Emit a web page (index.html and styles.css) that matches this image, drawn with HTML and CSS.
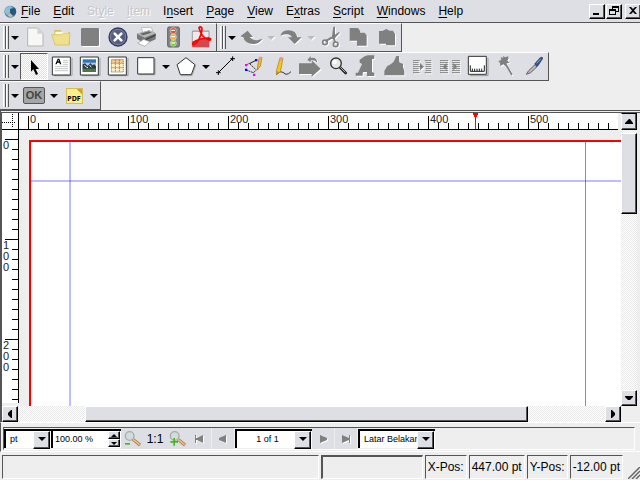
FILE: index.html
```
<!DOCTYPE html>
<html lang="en">
<head>
<meta charset="utf-8">
<title>Scribus</title>
<link rel="stylesheet" href="styles.css">
</head>
<body>
<header class="menubar">
  <svg class="app-icon" viewBox="0 0 39 39" aria-hidden="true"><circle cx="19" cy="20" r="18" fill="#4e86a6"/><path d="M3 14Q9 3 20 3L26 8 18 12 20 20 10 30Q0 24 3 14Z" fill="#8fc0d6"/><path d="M18 12L33 9Q38 16 36 24L27 33 18 24Z" fill="#29577c"/><path d="M10 30L18 24 27 33Q18 40 10 30Z" fill="#c9c0b2"/></svg>
  <nav class="menus">
    <button><u>F</u>ile</button>
    <button><u>E</u>dit</button>
    <button disabled>St<u>y</u>le</button>
    <button disabled><u>I</u>tem</button>
    <button>I<u>n</u>sert</button>
    <button><u>P</u>age</button>
    <button><u>V</u>iew</button>
    <button>E<u>x</u>tras</button>
    <button><u>S</u>cript</button>
    <button><u>W</u>indows</button>
    <button><u>H</u>elp</button>
  </nav>
  <div class="window-buttons">
    <button class="raised" aria-label="Minimize"><svg viewBox="0 0 12 12"><path d="M2 8h6v2H2z"/></svg></button>
    <button class="raised" aria-label="Restore"><svg viewBox="0 0 12 12"><path d="M4 1h7v6H8V6h2V3H5v1H4zM1 4h7v6H1zM2 6v3h5V6z" fill-rule="evenodd"/></svg></button>
    <button class="raised close" aria-label="Close"><svg viewBox="0 0 12 12"><path d="M2 2h2l2 2 2-2h2L7 5.500 10 9H8L6 7 4 9H2l3-3.500z"/></svg></button>
  </div>
</header>

<div class="toolbar-row">
  <div class="toolbar" role="toolbar" aria-label="File">
    <span class="grip"></span><button class="drop" aria-label="Toolbar menu"></button>
    <button class="tool" aria-label="New"><svg viewBox="60 72 84 81"><path d="M83 84h30l16 17v37H83z" fill="#f7f7f5" stroke="#b5b5b2" stroke-width="3"/><path d="M112 83l17 18h-17z" fill="#d5d5d3"/></svg></button>
    <button class="tool" aria-label="Open"><svg viewBox="144 72 84 81"><path d="M163 90h18l5 5h23v40h-43z" fill="#d6bd52"/><path d="M166 95h39v13h-39z" fill="#fbf8e5"/><path d="M155 104h30l6-5h19l-3 36h-42z" fill="#eee08c" stroke="#cdb956" stroke-width="2"/></svg></button>
    <button class="tool" aria-label="Save" disabled><svg viewBox="228 72 84 81"><rect x="243" y="84" width="54" height="54" rx="4"/></svg></button>
    <button class="tool" aria-label="Close document"><svg viewBox="312 72 84 81"><circle cx="354" cy="111" r="27" fill="#555d82" stroke="#343b5d" stroke-width="4"/><circle cx="354" cy="111" r="23" fill="none" stroke="#8e95b1" stroke-width="2"/><path d="M344 101l20 20M364 101l-20 20" stroke="#fff" stroke-width="8" stroke-linecap="round"/></svg></button>
    <button class="tool" aria-label="Print"><svg viewBox="396 72 84 81"><path d="M424 83l30-1 5 14-29 5z" fill="#fafafa" stroke="#aaa" stroke-width="2"/><path d="M411 101l37-10 19 9v18l-31 14-25-16z" fill="#777"/><path d="M411 101l37-10 19 9-33 13z" fill="#b9b9b9"/><path d="M420 101l26-7 9 4-26 8z" fill="#666"/><path d="M413 130l18-12 18 7-14 14z" fill="#fff" stroke="#999" stroke-width="2"/><path d="M437 116l30-13v5l-30 13z" fill="#444"/></svg></button>
    <button class="tool" aria-label="Preflight"><svg viewBox="480 72 84 81"><rect x="503" y="81" width="35" height="60" rx="4" fill="#858585" stroke="#626262" stroke-width="3"/><circle cx="520" cy="92" r="9" fill="#e44436" stroke="#ddd" stroke-width="2"/><circle cx="520" cy="111" r="9" fill="#f5ae29" stroke="#ddd" stroke-width="2"/><circle cx="520" cy="130" r="9" fill="#72cf32" stroke="#ddd" stroke-width="2"/><path d="M514 91h11M514 110h11M514 129h11" stroke="#fff6cc" stroke-width="4"/></svg></button>
    <button class="tool" aria-label="Export PDF"><svg viewBox="564 72 84 81"><path d="M577 94h50v47h-50z" fill="#eaeaf0" stroke="#777" stroke-width="2"/><path d="M577 126L627 110v31h-50z" fill="#d4474c"/><path d="M577 92h50" stroke="#bbb" stroke-width="3"/><path d="M597 83c3-4 9-2 9 5 0 14-13 43-25 46-5 0-4-7 4-10 12-7 30-10 43-9 7 2 4 6-2 5-14-4-25-20-27-31z" fill="none" stroke="#f00" stroke-width="5"/></svg></button>
  </div>
  <div class="toolbar" role="toolbar" aria-label="Edit">
    <span class="grip"></span><button class="drop" aria-label="Toolbar menu"></button>
    <button class="tool" aria-label="Undo" disabled><svg viewBox="81 72 84 81"><path d="M91 109l22-17 16 19h-10q9 12 26 9l12-4q-9 16-28 16-25-1-29-20z"/></svg></button>
    <button class="drop" aria-label="Undo history" disabled></button>
    <button class="tool" aria-label="Redo" disabled><svg viewBox="201 72 84 81"><path d="M211 107q5-16 25-16 22 0 26 21h13l-21 20-20-20h12q-8-15-35-5z"/></svg></button>
    <button class="drop" aria-label="Redo history" disabled></button>
    <button class="tool" aria-label="Cut" disabled><svg viewBox="321 72 84 81"><path d="M370 80h5v24l13-9v5l-15 16-8 1z"/><path d="M366 112L346 124M371 113l4 14" fill="none" stroke="#808080" stroke-width="6"/><circle cx="345" cy="127" r="7" fill="none" stroke="#808080" stroke-width="5"/><circle cx="377" cy="133" r="7" fill="none" stroke="#808080" stroke-width="5"/></svg></button>
    <button class="tool" aria-label="Copy" disabled><svg viewBox="405 72 84 81"><path d="M419 84h25l7 9v5h13l6 8v31h-29v-15h-22z"/></svg></button>
    <button class="tool" aria-label="Paste" disabled><svg viewBox="489 72 84 81"><path d="M507 93h10l12-6 10 5h10l6 10v34h-26l-1-5h-21z"/></svg></button>
  </div>
</div>

<div class="toolbar-row">
  <div class="toolbar" role="toolbar" aria-label="Tools">
    <span class="grip"></span><button class="drop" aria-label="Toolbar menu"></button>
    <button class="tool pressed" aria-label="Select"><svg viewBox="60 159 84 81"><path d="M93 180v35l7-7 8 17 6-3-7-15h10z" fill="#000"/></svg></button>
    <button class="tool" aria-label="Text frame"><svg viewBox="144 159 84 81"><path d="M216 174v53h-54" fill="none" stroke="#999" stroke-width="3"/><path d="M157 171h54v54h-54z" fill="#fff" stroke="#333" stroke-width="3"/><path d="M166 193h4l2-5h6l2 5h4l-6-17h-5zM173 184l2-5 2 5z" fill="#000" fill-rule="evenodd"/><path d="M189 182h15M189 188h15M189 194h15M165 200h39M165 206h39M165 212h39" stroke="#aaa" stroke-width="2"/></svg></button>
    <button class="tool" aria-label="Image frame"><svg viewBox="228 159 84 81"><path d="M300 174v53h-54" fill="none" stroke="#999" stroke-width="3"/><path d="M241 171h54v54h-54z" fill="#fff" stroke="#333" stroke-width="3"/><path d="M248 178h40v38h-40z" fill="#3174b4"/><path d="M248 188h40v13h-40z" fill="#a9cde8"/><path d="M248 193l7-3 8 8 9-9 5 7 6-3 5 6v9h-40z" fill="#303a40"/><path d="M248 206h40v10h-40z" fill="#497842"/><path d="M253 196l6 5 5 2M269 195l5 7" stroke="#eee" stroke-width="3"/></svg></button>
    <button class="tool" aria-label="Table"><svg viewBox="312 159 84 81"><path d="M384 174v53h-54" fill="none" stroke="#999" stroke-width="3"/><path d="M325 171h54v54h-54z" fill="#fff" stroke="#333" stroke-width="3"/><path d="M334 179h36v37h-36z" fill="#fff0c4"/><path d="M334 179h36v10h-36z" fill="#ffc789"/><path d="M334 190h36M334 203h36M346 179v37M358 179v37M334 216h36V179h-36z" fill="none" stroke="#555" stroke-width="2" stroke-dasharray="4 2"/></svg></button>
    <button class="tool" aria-label="Shape"><svg viewBox="396 159 84 81"><path d="M465 176v48h-48" fill="none" stroke="#999" stroke-width="3"/><path d="M413 173h49v49h-49z" fill="#fff" stroke="#333" stroke-width="3"/></svg></button>
    <button class="drop" aria-label="Choose shape"></button>
    <button class="tool" aria-label="Polygon"><svg viewBox="516 159 84 81"><path d="M560 176l27 21-11 30h-33" fill="none" stroke="#aaa" stroke-width="3"/><path d="M558 173l27 21-11 30h-33l-10-30z" fill="#fff" stroke="#333" stroke-width="3"/></svg></button>
    <button class="drop" aria-label="Polygon properties"></button>
    <button class="tool" aria-label="Line"><svg viewBox="6 159 84 81"><path d="M25 218L67 176M18 218h14M25 211v14M61 176h14M68 169v14" stroke="#000" stroke-width="3"/></svg></button>
    <button class="tool" aria-label="Bezier curve"><svg viewBox="90 159 84 81"><path d="M108 195l30-14-19 10 20 19-9 8-24-9" fill="none" stroke="#333" stroke-width="3" stroke-dasharray="6 2"/><path d="M148 172h8l-5 26-9 12 1-13z" fill="#f4bf18" stroke="#987018" stroke-width="2"/><path d="M148 171h8l-1 7h-8z" fill="#e79982"/><path d="M135 177h7v7h-7zM105 206h7v7h-7z" fill="#00f"/><path d="M105 192h7v7h-7zM129 221h7v7h-7z" fill="#f0f"/></svg></button>
    <button class="tool" aria-label="Freehand line"><svg viewBox="174 159 84 81"><path d="M198 224c15-16 22-5 30-1q8 0 15-8" fill="none" stroke="#333" stroke-width="3"/><path d="M210 174l9 1-8 41-11 8-1-10z" fill="#f8c817" stroke="#a57619" stroke-width="2"/><path d="M210 171l9 2-2 9-8-1z" fill="#e79982"/><path d="M199 214l12 2-11 8z" fill="#b48961"/></svg></button>
    <button class="tool" aria-label="Rotate" disabled><svg viewBox="258 159 84 81"><path d="M267 190h38v-9l27 25-27 24v-8h-38z"/><path d="M292 180l10-12v6q18-3 20 14-8-9-20-7v6z"/></svg></button>
    <button class="tool" aria-label="Zoom"><svg viewBox="342 159 84 81"><path d="M390 202l17 17" stroke="#222" stroke-width="8" stroke-linecap="round"/><path d="M390 201l16 16" stroke="#aaa" stroke-width="3"/><circle cx="378" cy="190" r="16" fill="#e7e7e7" stroke="#333" stroke-width="4"/><circle cx="374" cy="186" r="7" fill="#fafafa"/></svg></button>
    <button class="tool" aria-label="Edit contents" disabled><svg viewBox="426 159 84 81"><path d="M437 218h7l12-26-7-4v-9l15-10 9-3h20v10l-7 2v38l7 3v9h-22v-12h-11l-2 3v8h-21z"/></svg></button>
    <button class="tool" aria-label="Edit text" disabled><svg viewBox="510 159 84 81"><path d="M523 226v-13l8-14 12-7 8-7 8-17h8l1 19 11 5v9l4 12v13z"/></svg></button>
    <button class="tool" aria-label="Link frames" disabled><svg viewBox="-36 159 84 81"><path d="M-21 182H-1M-21 188H-4M-21 194H-4M-21 206H-4M-21 212H-4M-21 218H-1M14 182h20M17 188h17M17 194h17M17 206h17M17 212h17M14 218h20M-21 200H7M17 200h17" stroke="#808080" stroke-width="3"/><path d="M0 189l12 11-12 11z"/></svg></button>
    <button class="tool" aria-label="Unlink frames" disabled><svg viewBox="48 159 84 81"><path d="M60 182h24M60 188h24M60 194h24M60 200h24M60 206h24M60 212h24M60 218h24M96 182h24M96 188h24M96 194h24M96 200h24M96 206h24M96 212h24M96 218h24" stroke="#808080" stroke-width="3"/><path d="M80 189v22l-12-11zM100 189v22l12-11z"/></svg></button>
    <button class="tool" aria-label="Measure"><svg viewBox="132 159 84 81"><path d="M204 174v53h-54" fill="none" stroke="#999" stroke-width="3"/><path d="M145 169h54v54h-54z" fill="#fff" stroke="#333" stroke-width="3"/><path d="M151 196v18h42v-18M157 214v-8M164 214v-8M171 214v-8M178 214v-8M185 214v-8" fill="none" stroke="#222" stroke-width="3"/></svg></button>
    <button class="tool" aria-label="Copy properties" disabled><svg viewBox="216 159 84 81"><path d="M249 167l6 5 9-3 2 6-4 7 7 7-9 1-2 9-8-6-9 5-1-9-5-6 9-3-2-9 8 3z"/><path d="M257 192l19 33" stroke="#808080" stroke-width="5"/></svg></button>
    <button class="tool" aria-label="Eye dropper"><svg viewBox="300 159 84 81"><path d="M319 223l6-10 21-20 6 6-20 19z" fill="#b9b9bc" stroke="#656565" stroke-width="3"/><path d="M343 191l16-18q10-6 10 3l-14 21-6 4z" fill="#315282"/><path d="M350 190l12-13" stroke="#91a9cb" stroke-width="3"/></svg></button>
  </div>
</div>

<div class="toolbar-row">
  <div class="toolbar" role="toolbar" aria-label="PDF tools">
    <span class="grip"></span><button class="drop" aria-label="Toolbar menu"></button>
    <button class="tool" aria-label="PDF fields"><span class="ok-key">OK</span></button>
    <button class="drop" aria-label="Choose field"></button>
    <button class="tool" aria-label="PDF annotations"><span class="pdf-note">PDF</span></button>
    <button class="drop" aria-label="Choose annotation"></button>
  </div>
</div>

<main class="workspace">
  <div class="ruler-corner"></div>
  <div class="ruler-top"><span>0</span><span>100</span><span>200</span><span>300</span><span>400</span><span>500</span><svg class="pointer" viewBox="0 0 5 16" aria-hidden="true"><path d="M0 0h5v2H4v2H3v12H2V4H1V2H0z" fill="red"/></svg></div>
  <div class="scroll-v">
    <button class="raised" aria-label="Scroll up"><svg viewBox="0 0 12 12"><path d="M6 3h1l3 4v1H2V7z"/></svg></button>
    <div class="thumb raised"></div>
    <button class="raised" aria-label="Scroll down"><svg viewBox="0 0 12 12"><path d="M2 4h8v1L7 8H5L2 5z"/></svg></button>
  </div>
  <div class="ruler-left"><span>0</span><span>1<br>0<br>0</span><span>2<br>0<br>0</span></div>
  <div class="canvas"><div class="page"></div></div>
  <div class="scroll-h">
    <button class="raised" aria-label="Scroll left"><svg viewBox="0 0 12 12"><path d="M8 2v8H7L4 7V5l3-3z"/></svg></button>
    <div class="thumb raised"></div>
    <button class="raised" aria-label="Scroll right"><svg viewBox="0 0 12 12"><path d="M4 2h1l3 3v2l-3 3H4z"/></svg></button>
  </div>
</main>

<div class="view-panel">
  <div class="view-bar">
    <span class="combo unit"><select aria-label="Unit"><option>pt</option></select></span>
    <span class="spin"><input type="text" aria-label="Zoom" value="100.00 %"><span class="steps"><button class="raised" aria-label="Zoom up"><svg viewBox="0 0 8 4"><path d="M4 0l4 4H0z"/></svg></button><button class="raised" aria-label="Zoom down"><svg viewBox="0 0 8 4"><path d="M0 0h8L4 4z"/></svg></button></span></span>
    <button class="nav zoom" aria-label="Zoom out"><svg viewBox="366 146 60 60"><path d="M396 177l21 17" stroke="#a26f32" stroke-width="9"/><path d="M396 177l20 16" stroke="#ecc38c" stroke-width="5"/><circle cx="386" cy="167" r="13" fill="#d0ddda" stroke="#a8aaa8" stroke-width="4"/><path d="M372 188h15v5h-15z" fill="#45b526"/></svg></button>
    <button class="nav actual">1:1</button>
    <button class="nav zoom" aria-label="Zoom in"><svg viewBox="501 146 60 60"><path d="M531 177l21 17" stroke="#a26f32" stroke-width="9"/><path d="M531 177l20 16" stroke="#ecc38c" stroke-width="5"/><circle cx="521" cy="167" r="13" fill="#d0ddda" stroke="#a8aaa8" stroke-width="4"/><path d="M517 173h5v9h9v5h-9v9h-5v-9h-9v-5h9z" fill="#45b526"/></svg></button>
    <button class="nav page-nav" aria-label="First page" disabled><svg viewBox="0 0 12 12"><path d="M1 2h1v8H1zM2 5h1l6-3v8L3 7H2z"/></svg></button>
    <button class="nav page-nav" aria-label="Previous page" disabled><svg viewBox="0 0 12 12"><path d="M9 2v8L2 7V5z"/></svg></button>
    <span class="combo pages"><select aria-label="Page"><option>1 of 1</option></select></span>
    <button class="nav page-nav" aria-label="Next page" disabled><svg viewBox="0 0 12 12"><path d="M3 2l7 3v2l-7 3z"/></svg></button>
    <button class="nav page-nav" aria-label="Last page" disabled><svg viewBox="0 0 12 12"><path d="M2 2l7 3V2h1v8H9V7l-7 3z"/></svg></button>
    <span class="combo layer"><select aria-label="Layer"><option>Latar Belakang</option></select></span>
  </div>
</div>

<footer class="statusbar">
  <div class="cell message"></div>
  <div class="cell progress"></div>
  <div class="cell">X-Pos:</div>
  <div class="cell">447.00 pt</div>
  <div class="cell">Y-Pos:</div>
  <div class="cell">-12.00 pt</div>
  <svg class="size-grip" viewBox="0 0 12 12" aria-hidden="true"><path d="M0 12L12 0M4 12l8-8M8 12l4-4" stroke="#666" stroke-width="1.500"/></svg>
</footer>
</body>
</html>
```
FILE: styles.css
```
:root {
  --face: #dedfe4;
  --base: #eee;
  --dark: #555;
  --checker: conic-gradient(#fff 25%, #e9e9e9 0 50%, #fff 0 75%, #e9e9e9 0) 0 0 / 2px 2px;
}
* { box-sizing: border-box; }
body {
  margin: 0;
  height: 100vh;
  display: flex;
  flex-direction: column;
  overflow: hidden;
  background: var(--base);
  color: #000;
  font: 12px/14px "Liberation Sans", Arial, sans-serif;
}
button {
  margin: 0;
  padding: 0;
  border: 0;
  background: none;
  color: inherit;
  font: inherit;
  flex: none;
}
svg { display: block; }

.raised {
  background: var(--face);
  border: 1px solid;
  border-color: #fff #000 #000 #fff;
  box-shadow: inset -1px -1px var(--dark);
}

/* Menu bar */
.menubar {
  flex: none;
  height: 23px;
  display: flex;
  align-items: center;
  padding-left: 4px;
  background: var(--face);
  border-bottom: 1px solid var(--dark);
}
.app-icon { width: 13px; height: 13px; }
.menus { display: flex; gap: 13px; margin-left: 4px; flex: 1; }
.menus button:disabled { color: #c5c6ca; text-shadow: 1px 1px #fff; }
u { text-underline-offset: 2px; text-decoration-skip-ink: none; }
.window-buttons { display: flex; gap: 1px; margin-right: -1px; }
.window-buttons button { width: 16px; height: 15px; }
.window-buttons svg { width: 12px; height: 12px; margin: 0 1px; }
.window-buttons .close { margin-left: 2px; }

/* Toolbars */
.toolbar-row { display: flex; flex: none; }
.toolbar {
  display: flex;
  align-items: center;
  height: 29px;
  padding-left: 3px;
  background: var(--face);
  border: solid var(--dark);
  border-width: 1px 1px 1px 0;
  border-top-color: #fff;
}
.grip {
  width: 6px;
  height: 23px;
  background: repeating-linear-gradient(90deg, #fff 0 1px, var(--face) 1px 2px, var(--dark) 2px 3px);
}
.drop { width: 12px; height: 27px; display: grid; place-items: center; }
.drop::before {
  content: "";
  border: solid transparent;
  border-width: 4px 4px 0;
  border-top-color: #000;
}
.drop:disabled::before { border-top-color: #bbbcc0; filter: drop-shadow(1px 1px 0 #fff); }
.grip + .drop { width: 11px; }
.tool { width: 28px; height: 27px; display: grid; place-items: center; }
.tool svg { width: 28px; height: 27px; }
.tool:disabled svg { fill: #808080; filter: drop-shadow(1px 1px 0 #fff); }
.pressed {
  background: conic-gradient(#fff 25%, #dedfe4 0 50%, #fff 0 75%, #dedfe4 0) 0 0 / 2px 2px;
  border: 1px solid;
  border-color: var(--dark) #fff #fff var(--dark);
}
.pressed svg { margin: -1px; }
.ok-key {
  width: 22px;
  height: 17px;
  border: 1px solid #555;
  border-radius: 2px;
  background: #a5a5a5;
  color: #444;
  font: bold 11px/15px "Liberation Sans", Arial, sans-serif;
  text-align: center;
}
.pdf-note {
  width: 17px;
  height: 16px;
  padding-top: 6px;
  border: 1px solid #d6bd52;
  background: linear-gradient(225deg, #c8a92f 0 4px, #ffee8e 4px);
  font: bold 7px/8px "Open Sans", Verdana, sans-serif;
}

/* Document window */
.workspace {
  flex: 1;
  min-height: 0;
  display: grid;
  grid-template: 17px 1fr 16px / 17px 1fr 16px;
  padding-right: 3px;
  border-left: 2px solid var(--dark);
  border-top: 3px double var(--dark);
}
.ruler-corner {
  background:
    repeating-linear-gradient(90deg, #000 0 1px, #fff 1px 2px) 0 9px / 14px 1px no-repeat,
    repeating-linear-gradient(#000 0 1px, #fff 1px 2px) 10px 1px / 1px 14px no-repeat,
    #fff;
  border: solid #000;
  border-width: 0 1px 1px 0;
}
.ruler-top, .ruler-left { color: #222; font-size: 11px; line-height: 11px; overflow: hidden; }
.ruler-top {
  position: relative;
  display: flex;
  margin-right: 3px;
  padding: 3px 0 0 9px;
  background: repeating-linear-gradient(90deg, #000 0 1px, transparent 1px 10px) 9px 10px / 100% 6px no-repeat, #fff;
  border-bottom: 1px solid #000;
}
.ruler-top span { flex: none; width: 100px; padding-left: 1px; border-left: 1px solid #000; line-height: 6px; }
.pointer {
  position: absolute;
  left: 454px;
  top: 0;
  width: 5px;
  height: 16px;
}
.ruler-left {
  display: flex;
  flex-direction: column;
  margin-bottom: 3px;
  padding: 9px 0 0 1px;
  background: repeating-linear-gradient(#000 0 1px, transparent 1px 10px) 10px 9px / 6px 100% no-repeat, #fff;
  border-right: 1px solid #000;
}
.ruler-left span {
  flex: none;
  height: 100px;
  padding-top: 1px;
  background: linear-gradient(#000, #000) 2px 0 / 100% 1px no-repeat;
}
.canvas { display: flex; padding: 10px 0 0 10px; }
.page {
  flex: 1;
  border: solid red;
  border-width: 2px 0 0 2px;
  background:
    linear-gradient(#0000ff42, #0000ff42) 38px 0 / 2px 100% no-repeat,
    linear-gradient(#0000ff42, #0000ff42) 0 38px / 100% 2px no-repeat,
    linear-gradient(#0000ff80, #0000ff80) 554px 0 / 1px 100% no-repeat,
    #fff;
}
.scroll-v {
  grid-area: 1 / 3 / 3 / 4;
  display: flex;
  flex-direction: column;
  background: var(--checker);
}
.scroll-v .thumb { height: 81px; margin: 3px 0 auto; }
.scroll-h { grid-area: 3 / 1 / 4 / 3; display: flex; background: var(--checker); }
.scroll-h .thumb { flex: 0 1 443px; margin: 0 auto 0 67px; }
.scroll-v button, .scroll-h button { width: 16px; height: 16px; }
.scroll-v button:first-child { height: 17px; border-top-color: #000; }
.workspace button svg { width: 12px; height: 12px; margin: 1px; }

/* View controls */
.view-panel {
  flex: none;
  padding: 4px 5px 1px 2px;
  border: solid #fff;
  border-width: 1px 0;
  border-left: 1px solid var(--dark);
}
.view-bar {
  display: flex;
  height: 23px;
  border: 1px solid;
  border-color: var(--dark) #fff #fff var(--dark);
}
.combo, .spin {
  display: flex;
  height: 19px;
  margin-top: 1px;
  border: solid #000;
  border-width: 2px 0 0 2px;
  background: #fff;
}
.combo { position: relative; }
.combo::before {
  content: "";
  position: absolute;
  right: 1px;
  top: 0;
  width: 15px;
  height: 16px;
  background: var(--face);
  border: 1px solid;
  border-color: #fff #000 #000 #fff;
  box-shadow: inset -1px -1px var(--dark);
  pointer-events: none;
}
.combo::after {
  content: "";
  position: absolute;
  right: 5px;
  top: 6px;
  border: solid transparent;
  border-width: 4px 4px 0;
  border-top-color: #000;
  pointer-events: none;
}
.combo select {
  appearance: none;
  width: 100%;
  margin: 0 18px 0 0;
  padding: 0 0 0 4px;
  border: 0;
  background: #fff;
  color: #000;
  font: 9px/17px "Liberation Sans", Arial, sans-serif;
  text-overflow: clip;
}
.unit { width: 47px; }
.pages { width: 77px; }
.pages select { text-align: center; }
.layer { width: 77px; }
.spin { width: 70px; }
.spin input {
  flex: 1;
  min-width: 0;
  padding: 0 0 0 2px;
  border: 0;
  background: none;
  font: 9px/17px "Liberation Sans", Arial, sans-serif;
}
.steps { display: flex; flex-direction: column; padding-right: 1px; }
.steps button { width: 12px; height: 8px; display: grid; place-items: center; }
.steps svg { width: 6px; height: 3px; }
.nav { background: var(--face); height: 21px; display: grid; place-items: center; }
.zoom { width: 23px; }
.zoom svg { width: 20px; height: 20px; }
.actual { width: 22px; }
.page-nav { width: 23px; border-right: 1px solid var(--base); }
.page-nav svg { width: 12px; height: 12px; fill: #808080; filter: drop-shadow(1px 1px 0 #fff); }

/* Status bar */
.statusbar { flex: none; display: flex; gap: 2px; height: 28px; padding: 3px 0 1px 2px; }
.cell {
  border: 1px solid;
  border-color: var(--dark) #fff #fff var(--dark);
  padding: 0 2px;
  line-height: 22px;
  white-space: nowrap;
}
.message { flex: 1; }
.progress { width: 102px; border-width: 2px 1px 1px 2px; }
.size-grip { width: 12px; height: 12px; margin: 12px 0 0 3px; }
```
